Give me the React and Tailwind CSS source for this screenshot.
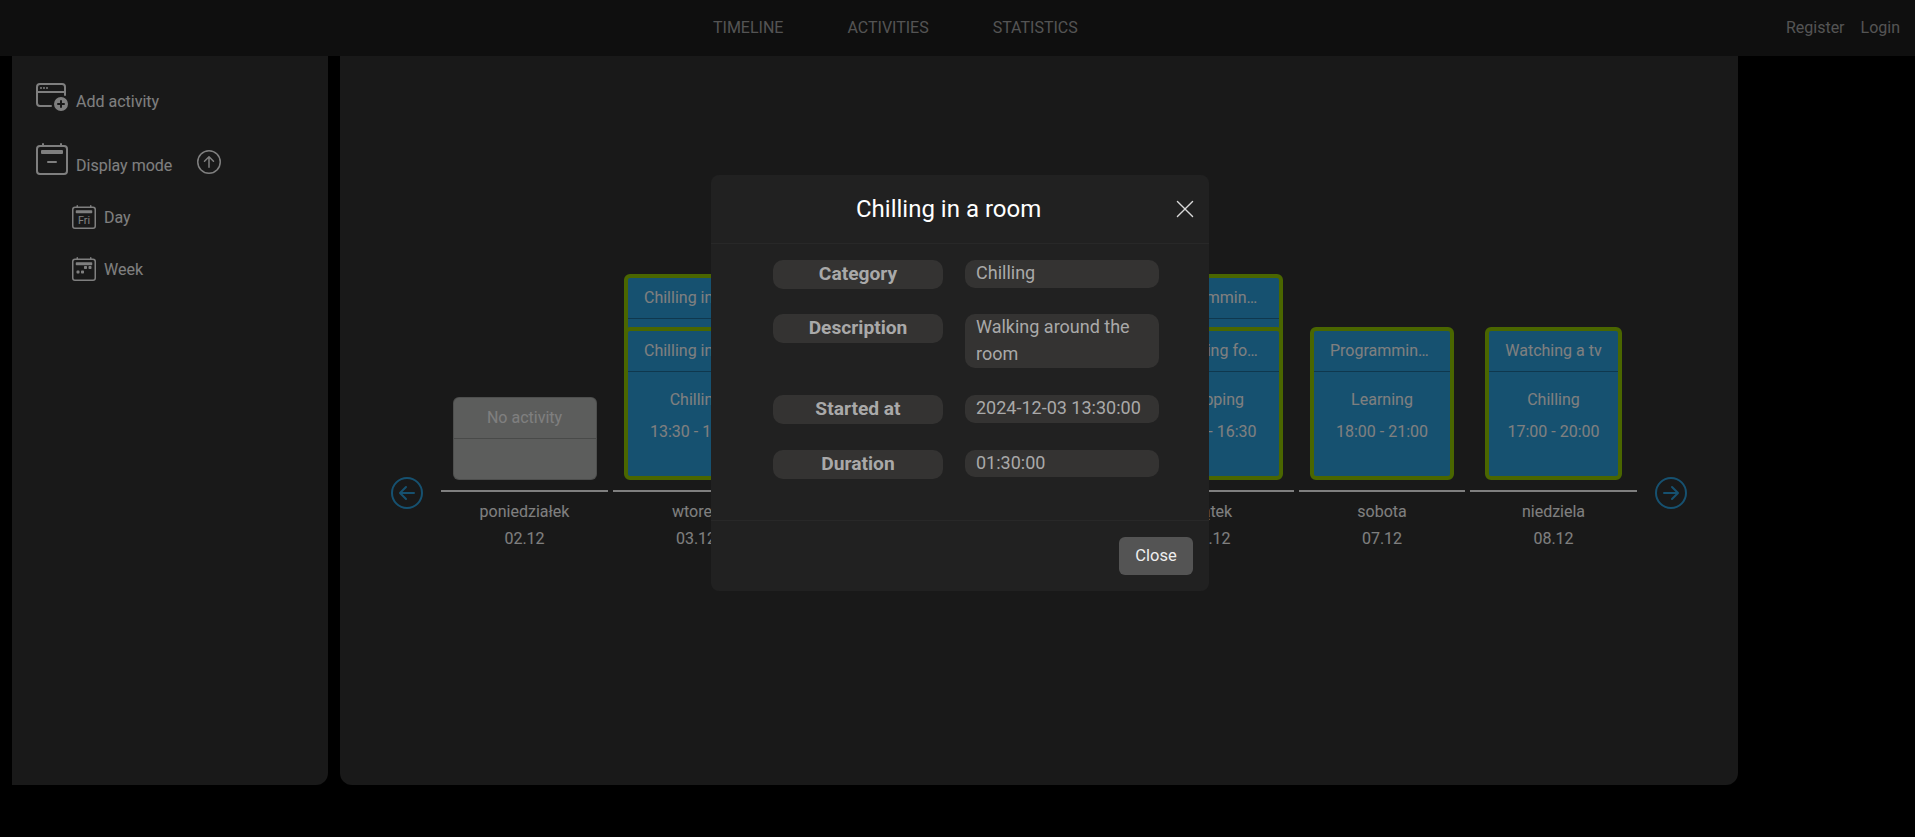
import React from 'react';
import {
  BsWindowPlus,
  BsArrowUpCircle,
  BsArrowLeftCircle,
  BsArrowRightCircle,
  BsXLg,
} from 'react-icons/bs';

const days = [
  { name: 'poniedziałek', date: '02.12', cards: [] },
  {
    name: 'wtorek',
    date: '03.12',
    cards: [
      { title: 'Chilling in a room', category: 'Chilling', time: '09:00 - 11:00' },
      { title: 'Chilling in a room', category: 'Chilling', time: '13:30 - 15:00' },
    ],
  },
  {
    name: 'środa',
    date: '04.12',
    cards: [{ title: 'Programming', category: 'Learning', time: '10:00 - 12:00' }],
  },
  {
    name: 'czwartek',
    date: '05.12',
    cards: [{ title: 'Watching a tv', category: 'Chilling', time: '19:00 - 21:00' }],
  },
  {
    name: 'piątek',
    date: '06.12',
    cards: [
      { title: 'Programming a website', category: 'Learning', time: '10:00 - 12:00' },
      { title: 'Swapping for food', category: 'Shopping', time: '15:00 - 16:30' },
    ],
  },
  {
    name: 'sobota',
    date: '07.12',
    cards: [{ title: 'Programming a website', category: 'Learning', time: '18:00 - 21:00' }],
  },
  {
    name: 'niedziela',
    date: '08.12',
    cards: [{ title: 'Watching a tv', category: 'Chilling', time: '17:00 - 20:00' }],
  },
];

const details = [
  { label: 'Category', value: 'Chilling', rowClass: 'mb-[25.6px]' },
  { label: 'Description', value: 'Walking around the room', rowClass: 'mb-[27px]' },
  { label: 'Started at', value: '2024-12-03 13:30:00', rowClass: 'mb-[25.6px]' },
  { label: 'Duration', value: '01:30:00', rowClass: 'mb-[25.6px]' },
];

// older bootstrap calendar outline with the separate bar, the package only has the newer one
function CalendarIcon({ size, children }) {
  return (
    <svg width={size} height={size} viewBox="0 0 16 16" fill="currentColor" className="shrink-0">
      <path
        fillRule="evenodd"
        d="M3.5 0a.5.5 0 0 1 .5.5V1h8V.5a.5.5 0 0 1 1 0V1h1a2 2 0 0 1 2 2v11a2 2 0 0 1-2 2H2a2 2 0 0 1-2-2V3a2 2 0 0 1 2-2h1V.5a.5.5 0 0 1 .5-.5zM2 2a1 1 0 0 0-1 1v11a1 1 0 0 0 1 1h12a1 1 0 0 0 1-1V3a1 1 0 0 0-1-1H2z"
      />
      <path d="M2.5 4a.5.5 0 0 1 .5-.5h10a.5.5 0 0 1 .5.5v1a.5.5 0 0 1-.5.5H3a.5.5 0 0 1-.5-.5V4z" />
      {children}
    </svg>
  );
}

function Navbar() {
  return (
    <header className="flex h-14 shrink-0 items-center bg-[#1e1e1e] pb-[1px] text-base text-[#a8a8a8]">
      <nav className="ml-[713px] flex gap-16">
        <a>TIMELINE</a>
        <a>ACTIVITIES</a>
        <a>STATISTICS</a>
      </nav>
      <div className="ml-auto flex gap-4 pr-[15px]">
        <a>Register</a>
        <a>Login</a>
      </div>
    </header>
  );
}

function Sidebar() {
  return (
    <aside className="ml-3 w-[316px] shrink-0 rounded-br-xl bg-[#323232] pl-6 pt-[23px] text-base text-white">
      <div className="flex items-end gap-2">
        <BsWindowPlus size={32} />
        <span className="-mb-[3px] leading-6">Add activity</span>
      </div>
      <div className="mt-[32px] flex items-end gap-2">
        <CalendarIcon size={32}>
          <path d="M5.5 9.5A.5.5 0 0 1 6 9h4a.5.5 0 0 1 0 1H6a.5.5 0 0 1-.5-.5z" />
        </CalendarIcon>
        <span className="translate-y-[3px] leading-6">Display mode</span>
        <BsArrowUpCircle size={24} className="mb-[1px] ml-[17px]" />
      </div>
      <div className="ml-9 mt-[30px] flex flex-col gap-7">
        <div className="flex items-center gap-2">
          <CalendarIcon size={24}>
            <text x="8" y="12.4" textAnchor="middle" fontSize="7.2" fontFamily="Roboto, sans-serif">
              Fri
            </text>
          </CalendarIcon>
          <span className="translate-y-[1px]">Day</span>
        </div>
        <div className="flex items-center gap-2">
          <CalendarIcon size={24}>
            <path d="M11 6.5a.5.5 0 0 1 .5-.5h1a.5.5 0 0 1 .5.5v1a.5.5 0 0 1-.5.5h-1a.5.5 0 0 1-.5-.5v-1zm-3 0a.5.5 0 0 1 .5-.5h1a.5.5 0 0 1 .5.5v1a.5.5 0 0 1-.5.5h-1a.5.5 0 0 1-.5-.5v-1zm-5 3a.5.5 0 0 1 .5-.5h1a.5.5 0 0 1 .5.5v1a.5.5 0 0 1-.5.5h-1a.5.5 0 0 1-.5-.5v-1zm3 0a.5.5 0 0 1 .5-.5h1a.5.5 0 0 1 .5.5v1a.5.5 0 0 1-.5.5h-1a.5.5 0 0 1-.5-.5v-1z" />
          </CalendarIcon>
          <span className="translate-y-[1px]">Week</span>
        </div>
      </div>
    </aside>
  );
}

function ActivityCard({ card, stacked }) {
  return (
    <div
      className={`relative h-[153px] w-fit max-w-[144px] rounded-md border-4 border-[#94cc00] bg-[#2ca2e0] text-center text-white ${
        stacked ? '-mt-[100px]' : ''
      }`}
    >
      <div className="truncate border-b border-black/30 px-4 py-2 leading-6">{card.title}</div>
      <div className="px-4 py-4">
        <p className="mb-2 leading-6">{card.category}</p>
        <p className="leading-6">{card.time}</p>
      </div>
    </div>
  );
}

function DayColumn({ day }) {
  return (
    <div className="w-[171.5px] shrink-0 text-center text-base text-white">
      <div className="flex flex-col items-center">
        {day.cards.length === 0 ? (
          <div className="h-[83px] w-[144px] rounded-md border border-black/15 bg-[#b8bab8] text-white">
            <div className="border-b border-black/20 px-4 py-2 leading-6">No activity</div>
          </div>
        ) : (
          day.cards.map((card, index) => (
            <ActivityCard key={index} card={card} stacked={index > 0} />
          ))
        )}
      </div>
      <div className="mx-[2.5px] mt-[10px] h-[2px] bg-white" />
      <p className="mt-2 leading-6">{day.name}</p>
      <p className="mt-[3px] leading-6">{day.date}</p>
    </div>
  );
}

function Timeline() {
  return (
    <main className="flex w-[1398px] shrink-0 items-end justify-center rounded-b-xl bg-[#323232] pb-[234px]">
      <BsArrowLeftCircle size={32} className="mb-[42px] mr-[15.5px] shrink-0 text-[#2ca2e0]" />
      {days.map((day) => (
        <DayColumn key={day.name} day={day} />
      ))}
      <BsArrowRightCircle size={32} className="mb-[42px] ml-[15.5px] shrink-0 text-[#2ca2e0]" />
    </main>
  );
}

function DetailsModal() {
  return (
    <div className="fixed inset-0 bg-black/50">
      <div className="ml-[711px] mt-[175px] h-[416px] w-[498px] rounded-lg bg-[#212121]">
        <div className="flex h-[69px] items-center border-b border-[#282828] pl-[145px] pr-4">
          <h2 className="text-2xl font-normal text-white">Chilling in a room</h2>
          <BsXLg size={22} className="-mr-[3px] ml-auto text-[#d8d8d8]" />
        </div>
        <div className="h-[277px] border-b border-[#282828] pl-[62px] pt-4">
          {details.map((row) => (
            <div key={row.label} className={`flex items-start gap-[22px] ${row.rowClass}`}>
              <div className="w-[170px] rounded-[10px] bg-[#343332] text-center text-[19.2px] font-bold leading-[28.8px] text-[#a9a9a9]">
                {row.label}
              </div>
              <div className="w-[194px] rounded-[10px] bg-[#343332] pb-[1px] pl-[11px] pr-3 text-lg leading-[26.5px] text-[#a9a9a9]">
                {row.value}
              </div>
            </div>
          ))}
        </div>
        <div className="flex justify-end p-4">
          <button className="h-[38px] w-[74px] rounded-md bg-[#545454] text-[16.5px] text-[#eeeeee]">
            Close
          </button>
        </div>
      </div>
    </div>
  );
}

export default function App() {
  return (
    <div className="flex h-screen flex-col overflow-hidden bg-black font-['Roboto',sans-serif]">
      <Navbar />
      <div className="flex h-[729px] gap-3">
        <Sidebar />
        <Timeline />
      </div>
      <DetailsModal />
    </div>
  );
}
